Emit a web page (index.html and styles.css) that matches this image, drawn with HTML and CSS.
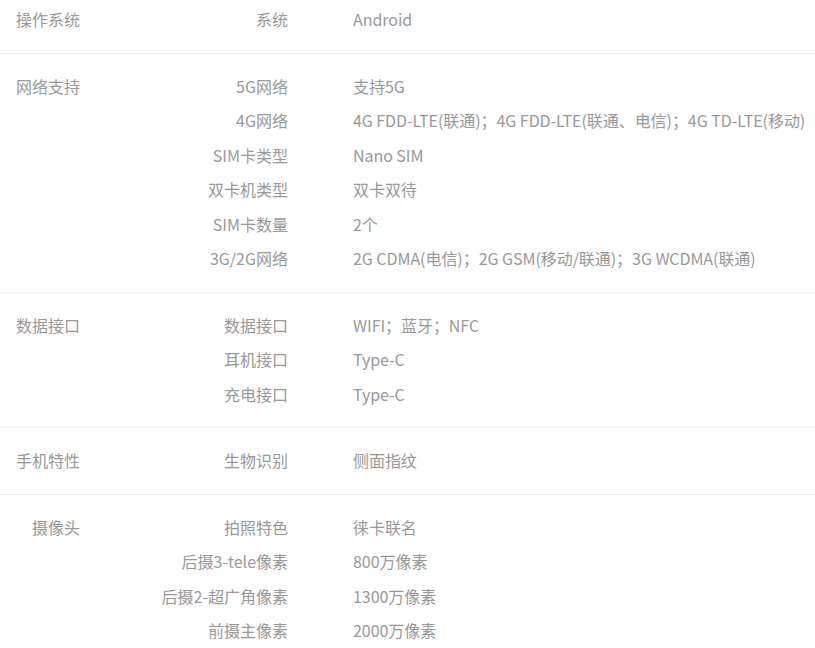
FILE: index.html
```html
<!DOCTYPE html>
<html lang="zh-CN">
<head>
<meta charset="utf-8">
<title>参数</title>
<link rel="stylesheet" href="styles.css">
</head>
<body>
<div class="specs">
  <section class="group first">
    <div class="cat">操作系统</div>
    <div class="rows">
      <div class="row"><span class="key">系统</span><span class="val">Android</span></div>
    </div>
  </section>
  <section class="group">
    <div class="cat">网络支持</div>
    <div class="rows">
      <div class="row"><span class="key">5G网络</span><span class="val">支持5G</span></div>
      <div class="row"><span class="key">4G网络</span><span class="val">4G FDD-LTE(联通)；4G FDD-LTE(联通、电信)；4G TD-LTE(移动)</span></div>
      <div class="row"><span class="key">SIM卡类型</span><span class="val">Nano SIM</span></div>
      <div class="row"><span class="key">双卡机类型</span><span class="val">双卡双待</span></div>
      <div class="row"><span class="key">SIM卡数量</span><span class="val">2个</span></div>
      <div class="row"><span class="key">3G/2G网络</span><span class="val">2G CDMA(电信)；2G GSM(移动/联通)；3G WCDMA(联通)</span></div>
    </div>
  </section>
  <section class="group">
    <div class="cat">数据接口</div>
    <div class="rows">
      <div class="row"><span class="key">数据接口</span><span class="val">WIFI；蓝牙；NFC</span></div>
      <div class="row"><span class="key">耳机接口</span><span class="val">Type-C</span></div>
      <div class="row"><span class="key">充电接口</span><span class="val">Type-C</span></div>
    </div>
  </section>
  <section class="group">
    <div class="cat">手机特性</div>
    <div class="rows">
      <div class="row"><span class="key">生物识别</span><span class="val">侧面指纹</span></div>
    </div>
  </section>
  <section class="group">
    <div class="cat">摄像头</div>
    <div class="rows">
      <div class="row"><span class="key">拍照特色</span><span class="val">徕卡联名</span></div>
      <div class="row"><span class="key">后摄3-tele像素</span><span class="val">800万像素</span></div>
      <div class="row"><span class="key">后摄2-超广角像素</span><span class="val">1300万像素</span></div>
      <div class="row"><span class="key">前摄主像素</span><span class="val">2000万像素</span></div>
    </div>
  </section>
</div>
</body>
</html>
```
FILE: styles.css
```css
html, body {
  margin: 0;
  padding: 0;
  background: #fff;
}
body {
  font-family: "Noto Sans CJK SC", "Noto Sans", sans-serif;
  font-size: 16px;
  color: #999;
}
.specs {
  width: 815px;
}
.group {
  display: flex;
  align-items: flex-start;
  padding: 16px 0 15px;
  border-bottom: 1px solid #eee;
}
.group.first {
  padding-top: 3px;
}
.cat {
  width: 80px;
  flex: none;
  text-align: right;
  box-sizing: border-box;
  height: 34.5px;
  line-height: 32.5px;
  padding-bottom: 2px;
  white-space: nowrap;
}
.rows {
  display: flex;
  flex-direction: column;
}
.row {
  display: flex;
  box-sizing: border-box;
  height: 34.5px;
  padding-bottom: 2px;
  align-items: center;
  white-space: nowrap;
}
.key {
  width: 208px;
  text-align: right;
  flex: none;
}
.val {
  margin-left: 65px;
  letter-spacing: -0.05px;
}
```
